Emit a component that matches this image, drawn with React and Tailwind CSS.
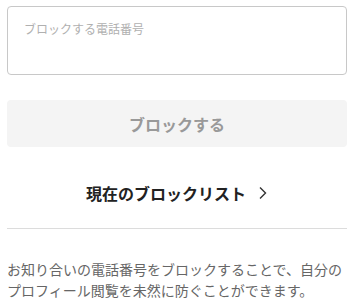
export default function App() {
  return (
    <div className="w-[354px] h-[305px] bg-white px-[7px] pt-[6px] overflow-hidden" style={{ fontFamily: '"Noto Sans CJK JP", "Noto Sans", sans-serif' }}>
      <textarea
        className="block w-full h-[69px] resize-none rounded-[4px] border border-[#c8c8c8] px-[16px] pt-[13px] text-[12px] leading-[18px] text-[#333] placeholder:text-[#b0b0b0] outline-none"
        placeholder="ブロックする電話番号"
      />
      <button className="mt-[25px] flex h-[47px] w-full items-center justify-center rounded-[4px] bg-[#f4f4f4] text-[16px] font-bold text-[#999]">
        ブロックする
      </button>
      <div className="flex h-[81px] items-center justify-center gap-[12px] pt-[11px] text-[16px] font-bold text-[#222]">
        <span>現在のブロックリスト</span>
        <svg width="10" height="14" viewBox="0 0 10 14" fill="none" stroke="#333" strokeWidth="1.4">
          <path d="M2 1.5 L7.5 7 L2 12.5" />
        </svg>
      </div>
      <div className="h-px bg-[#dcdcdc]" />
      <p className="mt-[30px] text-[14px] leading-[21px] text-[#666]">
        お知り合いの電話番号をブロックすることで、自分のプロフィール閲覧を未然に防ぐことができます。
      </p>
    </div>
  );
}
